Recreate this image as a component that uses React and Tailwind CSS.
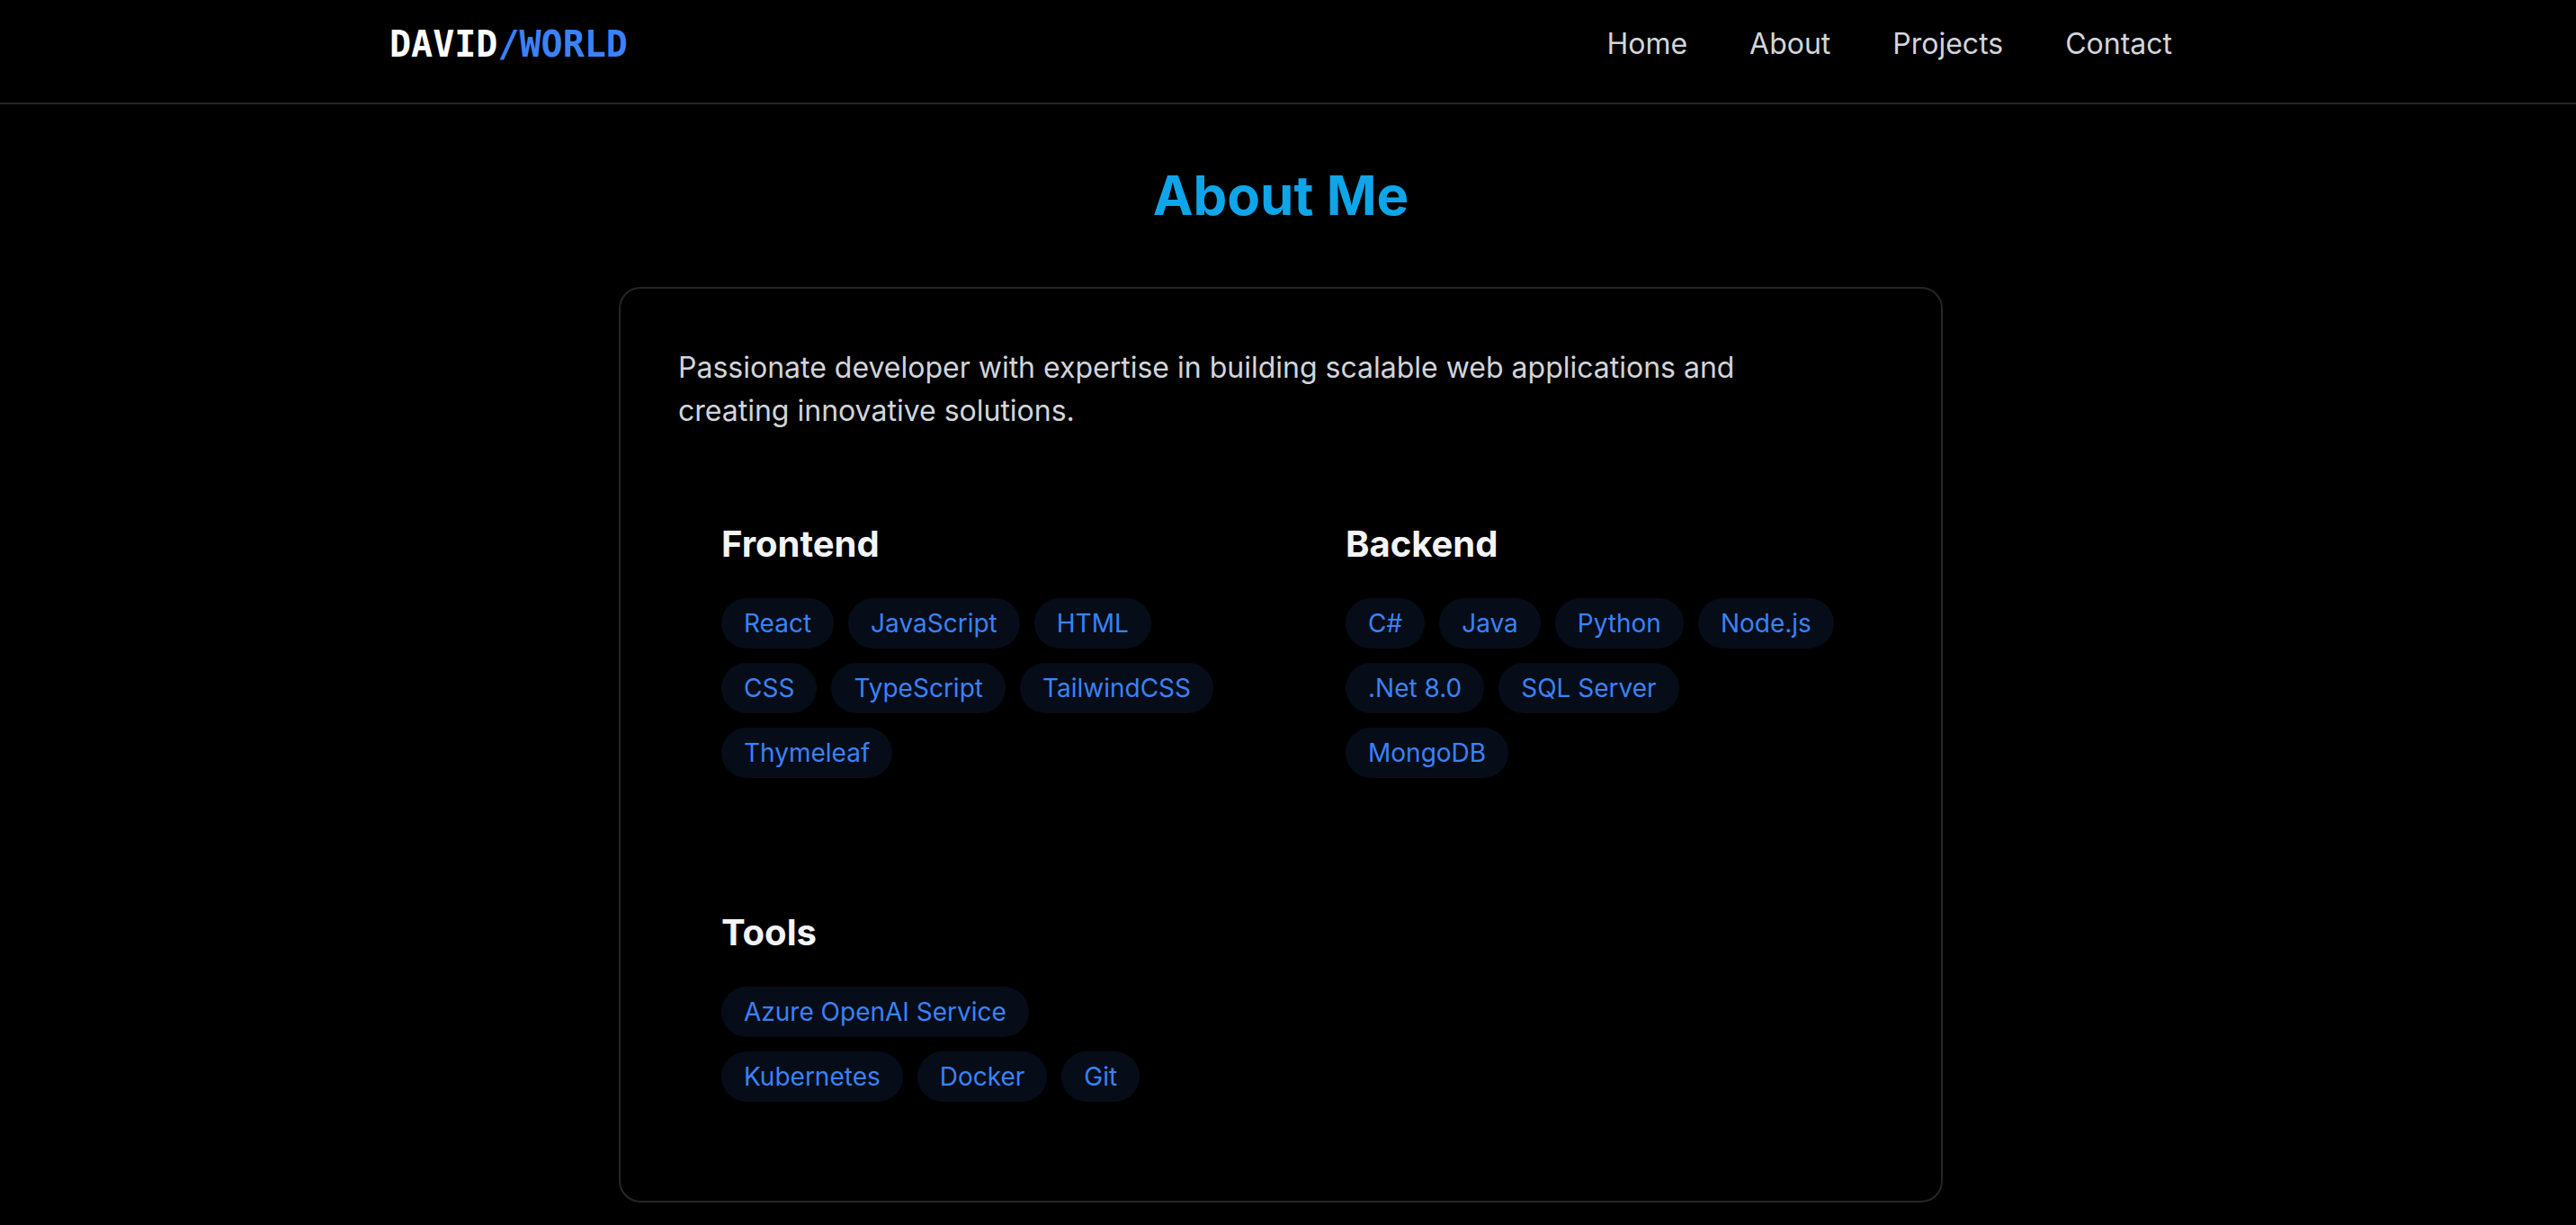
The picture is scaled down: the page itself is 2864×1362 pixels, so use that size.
import React from 'react';

const navLinks = ['Home', 'About', 'Projects', 'Contact'];

// filas de tags tal cual se ven en la tarjeta
const skillGroups = [
  {
    title: 'Frontend',
    rows: [
      ['React', 'JavaScript', 'HTML'],
      ['CSS', 'TypeScript', 'TailwindCSS'],
      ['Thymeleaf'],
    ],
  },
  {
    title: 'Backend',
    rows: [
      ['C#', 'Java', 'Python', 'Node.js'],
      ['.Net 8.0', 'SQL Server'],
      ['MongoDB'],
    ],
  },
  {
    title: 'Tools',
    rows: [['Azure OpenAI Service'], ['Kubernetes', 'Docker', 'Git']],
  },
];

const SkillTag = ({ label }) => (
  <span className="rounded-full bg-[#060d19] px-[25px] py-2 text-[28px] leading-[40px] text-[#3b82f6]">
    {label}
  </span>
);

const SkillGroup = ({ title, rows }) => (
  <div className="p-12">
    <h3 className="mb-8 font-['Inter',sans-serif] text-[40px] font-bold leading-[56px] text-[#f3f4f6]">
      {title}
    </h3>
    <div className="flex flex-col gap-4">
      {rows.map((row, i) => (
        <div key={i} className="flex gap-4">
          {row.map((item) => (
            <SkillTag key={item} label={item} />
          ))}
        </div>
      ))}
    </div>
  </div>
);

export default function App() {
  return (
    <div className="min-h-screen bg-black font-['Inter',sans-serif] text-[#d1d5db]">
      {/* HEADER */}
      <header className="border-b-2 border-[#262626]">
        <div className="w-[2848px]">
          <div className="mx-auto flex w-[1982px] items-center justify-between pt-[25px] pb-[41px]">
            <a className="font-['DejaVu_Sans_Mono',monospace] text-[40px] font-bold leading-[48px] text-white">
              DAVID<span className="text-[#3b82f6]">/WORLD</span>
            </a>
            <nav className="flex items-center gap-[69px] text-[32px] leading-[48px]">
              {navLinks.map((link) => (
                <a key={link} className="cursor-pointer hover:text-white">
                  {link}
                </a>
              ))}
            </nav>
          </div>
        </div>
      </header>

      {/* ABOUT */}
      <main className="w-[2848px] pt-[65px] pb-[40px]">
        <h2 className="mb-[66px] text-center text-[60px] font-bold leading-[72px] text-[#0ea5e9]">
          About Me
        </h2>

        <div className="mx-auto w-[1472px] rounded-[24px] border-2 border-[#262626] bg-black px-16 pt-[64px] pb-[62px]">
          <p className="mb-12 max-w-[1240px] text-[32px] leading-[48px] text-[#d1d5db]">
            Passionate developer with expertise in building scalable web applications and creating innovative solutions.
          </p>

          <div className="grid grid-cols-2 gap-12">
            {skillGroups.map((group) => (
              <SkillGroup key={group.title} title={group.title} rows={group.rows} />
            ))}
          </div>
        </div>
      </main>
    </div>
  );
}
